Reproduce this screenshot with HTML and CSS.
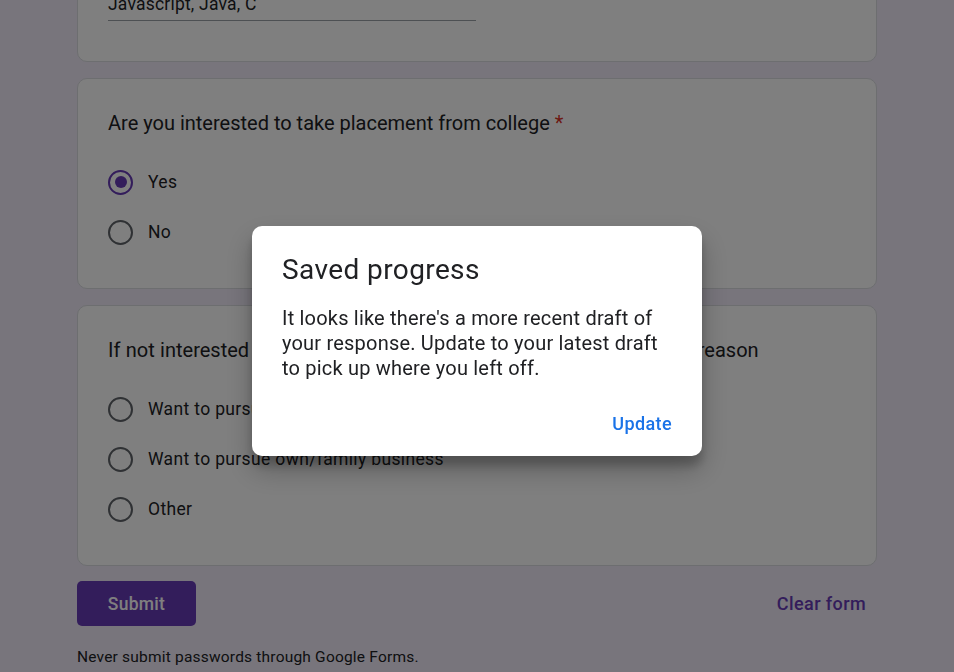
FILE: index.html
```html
<!DOCTYPE html>
<html lang="en">
<head>
<meta charset="utf-8">
<title>Form</title>
<link rel="stylesheet" href="styles.css">
</head>
<body>
<div class="page">
  <div class="card">
    <div class="q-title">Which programming languages do you know?</div>
    <div class="answer">Javascript, Java, C</div>
  </div>
  <div class="card">
    <div class="q-title">Are you interested to take placement from college <span class="req">*</span></div>
    <div class="options">
      <div class="option"><span class="radio checked"></span><span>Yes</span></div>
      <div class="option"><span class="radio"></span><span>No</span></div>
    </div>
  </div>
  <div class="card">
    <div class="q-title wide">If not interested to take placement from college, then mention the reason</div>
    <div class="options">
      <div class="option"><span class="radio"></span><span>Want to pursue higher studies</span></div>
      <div class="option"><span class="radio"></span><span>Want to pursue own/family business</span></div>
      <div class="option"><span class="radio"></span><span>Other</span></div>
    </div>
  </div>
  <div class="actions">
    <button class="submit">Submit</button>
    <button class="clear">Clear form</button>
  </div>
  <div class="footer">Never submit passwords through Google Forms.</div>
</div>
<div class="overlay">
  <div class="dialog">
    <div class="d-title">Saved progress</div>
    <div class="d-body">It looks like there's a more recent draft of your response. Update to your latest draft to pick up where you left off.</div>
    <div class="d-actions"><button class="d-btn">Update</button></div>
  </div>
</div>
</body>
</html>
```
FILE: styles.css
```css
html, body {
  margin: 0;
  padding: 0;
  background: #f0ebf8;
  font-family: Roboto, "Liberation Sans", Arial, sans-serif;
  color: #202124;
  overflow: hidden;
  height: 100%;
}
.page {
  width: 800px;
  margin: -101px 0 0 77px;
  display: flex;
  flex-direction: column;
  gap: 16px;
}
.card {
  background: #fff;
  border: 1px solid #dadce0;
  border-radius: 10px;
  padding: 30px 30px 31px 30px;
}
.q-title {
  font-size: 20px;
  line-height: 28px;
  white-space: nowrap;
}
.q-title.wide { word-spacing: 0.4px; }
.req { color: #d93025; }
.card:first-child .q-title { margin-bottom: 34px; }
.answer {
  width: 368px;
  font-size: 17.5px;
  line-height: 24px;
  letter-spacing: 0.2px;
  padding-bottom: 4px;
  border-bottom: 1px solid #9aa0a6;
  margin-bottom: 9px;
}
.options {
  margin-top: 20px;
  display: flex;
  flex-direction: column;
}
.option {
  height: 50px;
  display: flex;
  align-items: center;
  gap: 15px;
  font-size: 17.5px;
  letter-spacing: 0.35px;
}
.radio {
  box-sizing: border-box;
  width: 25px;
  height: 25px;
  border: 2.5px solid #5f6368;
  border-radius: 50%;
  display: flex;
  align-items: center;
  justify-content: center;
  flex: none;
}
.radio.checked { border-color: #673ab7; }
.radio.checked::after {
  content: "";
  width: 12px;
  height: 12px;
  border-radius: 50%;
  background: #673ab7;
}
.actions {
  margin-top: -1px;
  display: flex;
  justify-content: space-between;
  align-items: center;
}
.submit {
  width: 119px;
  height: 45px;
  border: none;
  border-radius: 5px;
  background: #673ab7;
  color: #fff;
  font-family: Roboto, "Liberation Sans", sans-serif;
  font-size: 17.5px;
  font-weight: 500;
  letter-spacing: 0.3px;
}
.clear {
  border: none;
  background: none;
  color: #673ab7;
  font-family: Roboto, "Liberation Sans", sans-serif;
  font-size: 18px;
  font-weight: 500;
  letter-spacing: 0.4px;
  padding: 0 11px;
  height: 45px;
}
.footer {
  margin-top: 5px;
  font-size: 15.5px;
  line-height: 20px;
  letter-spacing: 0.2px;
  color: #202124;
}
.overlay {
  position: fixed;
  inset: 0;
  background: rgba(0, 0, 0, 0.5);
  display: flex;
  align-items: center;
  justify-content: center;
  padding-top: 10px;
  box-sizing: border-box;
}
.dialog {
  width: 450px;
  box-sizing: border-box;
  background: #fff;
  border-radius: 10px;
  padding: 28px 30px 18px 30px;
  box-shadow: 0 14px 28px rgba(0,0,0,0.25), 0 10px 10px rgba(0,0,0,0.2);
}
.d-title {
  font-size: 28px;
  line-height: 32px;
  letter-spacing: 0.4px;
  color: #202124;
}
.d-body {
  margin-top: 19.5px;
  font-size: 20px;
  line-height: 25px;
  letter-spacing: 0.2px;
  color: #202124;
}
.d-actions {
  margin-top: 27.5px;
  display: flex;
  justify-content: flex-end;
}
.d-btn {
  border: none;
  background: none;
  color: #1a73e8;
  font-family: Roboto, "Liberation Sans", sans-serif;
  font-size: 18px;
  font-weight: 500;
  letter-spacing: 0.4px;
  padding: 0;
  height: 30px;
}
```
